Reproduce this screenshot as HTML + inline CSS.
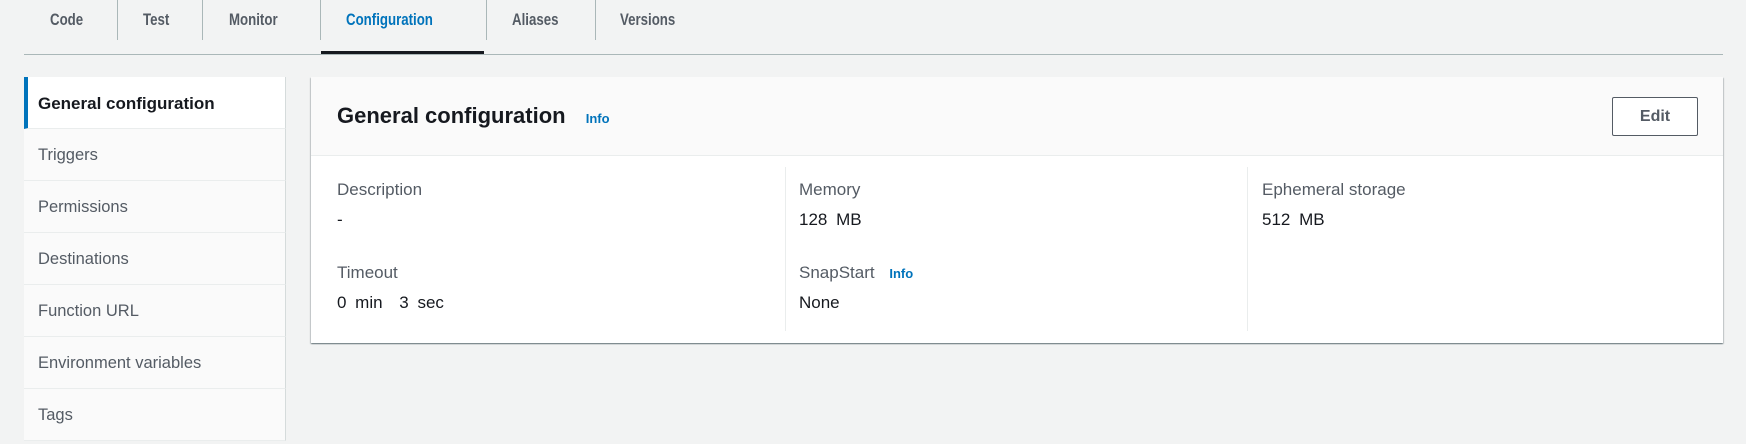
<!DOCTYPE html>
<html><head><meta charset="utf-8"><style>
*{box-sizing:border-box;margin:0;padding:0}
body{width:1746px;height:444px;background:#f2f3f3;font-family:"Liberation Sans",sans-serif;color:#16191f;position:relative;overflow:hidden}
.abs{position:absolute}
.tab{position:absolute;top:10px;font-size:17px;font-weight:bold;color:#545b64;transform:scaleX(.78);transform-origin:left;white-space:nowrap}
.sep{position:absolute;top:0;width:1px;height:40px;background:#aab7b8}
.nav{position:absolute;left:24px;width:262px;top:77px}
.nav div{height:52px;line-height:53px;padding-left:14px;font-size:16.5px;color:#545b64;background:#fafafa;border-bottom:1px solid #eaeded;border-right:1px solid #d5dbdb}
.nav div.act{background:#fff;color:#16191f;font-weight:bold;font-size:17px;border-left:4px solid #0073bb;padding-left:10px}
.lbl{position:absolute;font-size:17px;color:#545b64}
.val{position:absolute;font-size:17px;color:#16191f;word-spacing:4px}
.info{font-size:13px;font-weight:bold;color:#0073bb}
</style></head><body>
<div class="tab" style="left:50px">Code</div>
<div class="sep" style="left:117px"></div>
<div class="tab" style="left:143px">Test</div>
<div class="sep" style="left:202px"></div>
<div class="tab" style="left:229px">Monitor</div>
<div class="sep" style="left:320px"></div>
<div class="tab" style="left:346px;color:#0073bb">Configuration</div>
<div class="sep" style="left:486px"></div>
<div class="tab" style="left:512px">Aliases</div>
<div class="sep" style="left:595px"></div>
<div class="tab" style="left:620px">Versions</div>
<div class="abs" style="left:24px;top:54px;width:1699px;height:1px;background:#aab7b8"></div>
<div class="abs" style="left:321px;top:51px;width:163px;height:3px;background:#16191f"></div>

<div class="nav">
<div class="act">General configuration</div>
<div>Triggers</div>
<div>Permissions</div>
<div>Destinations</div>
<div>Function URL</div>
<div>Environment variables</div>
<div>Tags</div>
</div>

<div class="abs" style="left:311px;top:77px;width:1412px;height:266px;background:#fff;box-shadow:0 1px 1px 0 rgba(0,28,36,.4),1px 1px 1px 0 rgba(0,28,36,.15),-1px 1px 1px 0 rgba(0,28,36,.15)">
 <div class="abs" style="left:0;top:0;width:1412px;height:79px;background:#fafafa;border-bottom:1px solid #eaeded"></div>
 <div class="abs" style="left:26px;top:26px;font-size:22px;font-weight:bold">General configuration <span class="info" style="margin-left:14px">Info</span></div>
 <div class="abs" style="left:1301px;top:20px;width:86px;height:39px;border:1px solid #545b64;border-radius:2px;background:#fff;text-align:center;line-height:37px;font-weight:bold;font-size:16px;color:#545b64">Edit</div>
 <div class="abs" style="left:474px;top:90px;width:1px;height:164px;background:#eaeded"></div>
 <div class="abs" style="left:936px;top:90px;width:1px;height:164px;background:#eaeded"></div>
 <div class="lbl" style="left:26px;top:103px">Description</div>
 <div class="val" style="left:26px;top:133px">-</div>
 <div class="lbl" style="left:26px;top:186px">Timeout</div>
 <div class="val" style="left:26px;top:216px">0 min <span style="margin-left:8px">3 sec</span></div>
 <div class="lbl" style="left:488px;top:103px">Memory</div>
 <div class="val" style="left:488px;top:133px">128 MB</div>
 <div class="lbl" style="left:488px;top:186px">SnapStart <span class="info" style="margin-left:10px">Info</span></div>
 <div class="val" style="left:488px;top:216px">None</div>
 <div class="lbl" style="left:951px;top:103px">Ephemeral storage</div>
 <div class="val" style="left:951px;top:133px">512 MB</div>
</div>
</body></html>
